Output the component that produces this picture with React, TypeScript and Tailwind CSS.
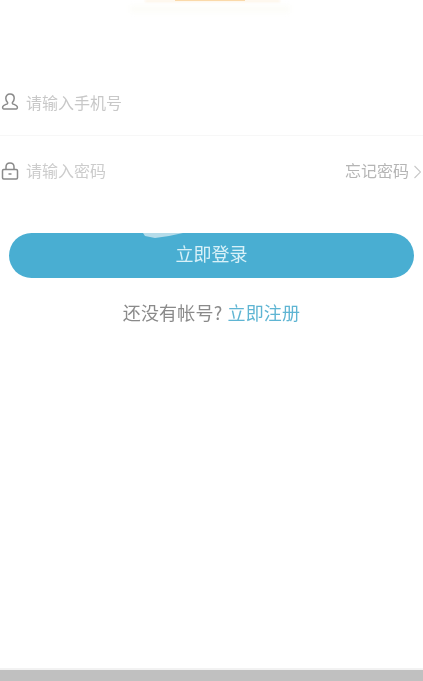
export default function App() {
  return (
    <div
      className="flex h-[681px] w-[423px] flex-col overflow-hidden bg-white"
      style={{ fontFamily: '"Noto Sans CJK SC", "Liberation Sans", sans-serif' }}
    >
      <div className="relative h-[71px] shrink-0">
        <div className="absolute left-[145px] top-0 h-[2px] w-[135px] bg-[#fdf3e4] blur-[1px]" />
        <div className="absolute left-[175px] top-0 h-[1px] w-[70px] bg-[#fad9a8] blur-[0.5px]" />
        <div className="absolute left-[130px] top-[5px] h-[8px] w-[160px] bg-[#fdfdf9] blur-[2px]" />
      </div>

      <div className="flex h-[65px] shrink-0 items-center border-b border-[#f7f7f7]">
        <svg className="ml-[1px] mb-[2px] h-[18px] w-[18px] shrink-0 blur-[0.4px]" viewBox="0 0 18 18" fill="none" stroke="#8a8a8a" strokeWidth="1.5">
          <path d="M9 1c-2.6 0-4.2 1.9-4.2 4.3 0 1.6.7 3 1.6 3.9.3.4.3 1.2 0 1.5-.8.7-3.9 1.2-4.6 2.8-.4.9-.1 2.5.8 2.5h12.8c.9 0 1.2-1.6.8-2.5-.7-1.6-3.8-2.1-4.6-2.8-.3-.3-.3-1.1 0-1.5.9-.9 1.6-2.3 1.6-3.9C13.2 2.9 11.6 1 9 1Z" />
        </svg>
        <span className="ml-[7px] pb-[3px] text-[16px] leading-[20px] text-[#c8c8c8] blur-[0.5px]">请输入手机号</span>
      </div>

      <div className="flex h-[71px] shrink-0 items-center">
        <svg className="ml-[1px] mb-[1px] h-[18px] w-[18px] shrink-0 blur-[0.4px]" viewBox="0 0 18 18" fill="none" stroke="#8a8a8a" strokeWidth="1.5">
          <rect x="1.5" y="7.5" width="15" height="9.5" rx="1.2" />
          <path d="M5 7.5V5C5 2.6 6.8 1 9 1s4 1.6 4 4v2.5" />
          <path d="M7.5 12h3" />
        </svg>
        <span className="ml-[7px] pb-[3px] text-[16px] leading-[20px] text-[#cccccc] blur-[0.5px]">请输入密码</span>
        <span className="ml-auto pb-[3px] text-[16px] leading-[20px] text-[#b5b5b5] blur-[0.5px]">忘记密码</span>
        <svg className="ml-[5px] mr-[2px] h-[14px] w-[7px] shrink-0 blur-[0.3px]" viewBox="0 0 7 14" fill="none" stroke="#c8c8c8" strokeWidth="1.1">
          <path d="M.5 1l6 6-6 6" />
        </svg>
      </div>

      <div className="relative mx-[9px] mt-[26px] flex h-[45px] shrink-0 items-center justify-center overflow-hidden rounded-full bg-[#49aed2]">
        <svg className="absolute left-[134px] top-0 h-[7px] w-[40px] blur-[0.6px]" viewBox="0 0 40 7" fill="#b5dcea">
          <path d="M0 0h40L26 3 12 5 2 3Z" />
        </svg>
        <span className="relative pb-[6px] text-[18px] leading-[24px] text-[#d8f1f8] blur-[0.4px]">立即登录</span>
      </div>

      <div className="mt-[23px] flex shrink-0 items-center justify-center pb-[1px] text-[18px] leading-[22px] tracking-[0.2px] blur-[0.4px]">
        <span className="text-[#8a8a8a]">还没有帐号?</span>
        <span className="ml-[5px] text-[#5fb5d3]">立即注册</span>
      </div>

      <div className="flex-1" />
      <div className="h-[13px] shrink-0 border-t-2 border-[#f2f2f2] bg-[#c0c0c0]" />
    </div>
  );
}
